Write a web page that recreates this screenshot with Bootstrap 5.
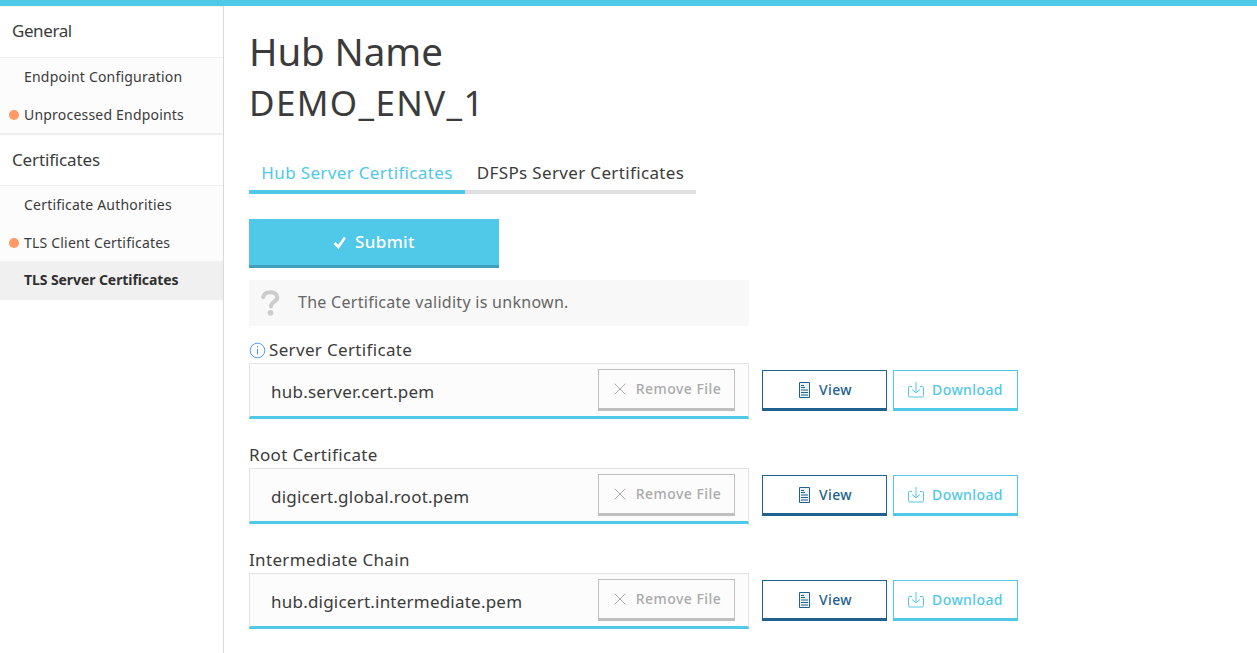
<!DOCTYPE html>
<html lang="en">
<head>
<meta charset="utf-8">
<meta name="viewport" content="width=device-width, initial-scale=1">
<title>TLS Server Certificates</title>
<link href="https://cdn.jsdelivr.net/npm/bootstrap@5.3.0/dist/css/bootstrap.min.css" rel="stylesheet">
<style>
:root{--sky:#50c8e8;--navy:#21618f;--ink:#3b3b3b}
body{font-family:"Noto Sans","Open Sans",sans-serif;color:var(--ink);font-size:17px;height:653px;overflow:hidden;border-top:6px solid var(--sky)}
.side{width:224px;border-right:1px solid #d9d9d9}
.side-title{height:51px;padding:0 0 1px 12px;letter-spacing:-.15px;border-bottom:1px solid #efefef}
.side-title.top{height:52px;padding-bottom:3px;letter-spacing:-.42px;border-top:1px solid #f4f4f4}
.side-group{background:#fcfcfc}
.side-group.first{border-bottom:2px solid #f0f0f0}
.side-link{height:37.5px;padding-left:24px;font-size:14px;letter-spacing:.2px;color:var(--ink);text-decoration:none;position:relative}
.side-link.current{height:39px;padding-bottom:3px;background:#f0f0f0;font-weight:700;letter-spacing:-.08px;color:#303030}
.pending::before{content:"";position:absolute;left:9px;top:14px;width:10px;height:10px;border-radius:50%;background:#ff9966}
.main-col{padding:17px 0 0 25px}
.hub-title{font-size:38.5px;line-height:56px;font-weight:400;letter-spacing:-.1px;margin:0}
.hub-name{font-size:35px;line-height:48px;font-weight:400;letter-spacing:1.35px;margin:0}
.tabs{margin-top:28px}
.tab{height:39px;border-bottom:4px solid #e0e0e0;letter-spacing:.35px;color:var(--ink);text-decoration:none}
.tab.on{color:var(--sky);border-color:var(--sky)}
.submit{width:250px;height:49px;margin-top:25px;border:0;border-bottom:3px solid #3f9fb8;border-radius:0;background:var(--sky);color:#fff;font-size:17px;font-weight:500;letter-spacing:.35px;padding:0}
.notice{width:500px;height:46px;margin-top:12px;background:#f8f8f8;color:#666;font-size:16px;letter-spacing:.28px;padding-left:12px}
.notice span{margin-left:18px;margin-bottom:2px}
.file-label{height:26px;line-height:26px;white-space:nowrap;letter-spacing:.34px;margin-top:23px}
.file-label.lead-in{margin-top:11px}
.file-name{letter-spacing:.22px;padding-top:3px}
.file-box{width:500px;height:56px;background:#fcfcfc;border:1px solid #e3e3e3;border-bottom:3px solid var(--sky);padding:0 13px 0 21px}
.act{border:1px solid;border-bottom-width:3px;border-radius:0;background:#fff;font-size:14px;font-weight:500;padding:0;height:41px;width:125px;letter-spacing:.4px}
.remove{width:137px;height:42px;color:#aaa;border-color:#bfbfbf;margin-bottom:1px;background:transparent;letter-spacing:.45px;padding-left:2px;gap:10px}
.view{color:var(--navy);border-color:var(--navy);margin-left:13px;margin-bottom:1px;padding-left:2px}
.download{color:var(--sky);border-color:var(--sky);margin-left:6px;margin-bottom:1px}
</style>
</head>
<body class="d-flex">
<svg class="d-none">
  <symbol id="i-x" viewBox="0 0 12 12"><path d="M.7.7l10.6 10.6M11.3.7L.7 11.3" fill="none" stroke="currentColor"/></symbol>
  <symbol id="i-doc" viewBox="0 0 12 16"><path d="M.5.5h10v15H.5z" fill="#edf3f7" stroke="currentColor"/><path d="M2 3.5h3M2 5.5h4M2 8h7M2 10.5h7M2 13h7" stroke="currentColor"/></symbol>
  <symbol id="i-down" viewBox="0 0 16 16"><path d="M4 4.5H1.7Q.5 4.500.5 5.700V13.500Q.5 15 2 15H14Q15.500 15 15.500 13.500V5.700Q15.500 4.500 14.300 4.500H12M8 0V10.500M4 7.500L8 10.800L12 7.500" fill="none" stroke="currentColor"/></symbol>
</svg>
<nav class="side flex-shrink-0">
  <div class="side-title top d-flex align-items-center">General</div>
  <div class="side-group first">
    <a class="side-link d-flex align-items-center" href="#">Endpoint Configuration</a>
    <a class="side-link pending d-flex align-items-center" href="#">Unprocessed Endpoints</a>
  </div>
  <div class="side-title d-flex align-items-center">Certificates</div>
  <div class="side-group">
    <a class="side-link d-flex align-items-center" href="#">Certificate Authorities</a>
    <a class="side-link pending d-flex align-items-center" href="#">TLS Client Certificates</a>
    <a class="side-link current d-flex align-items-center" href="#">TLS Server Certificates</a>
  </div>
</nav>
<main class="main-col flex-grow-1">
  <h1 class="hub-title"><span>Hub Name</span></h1>
  <h2 class="hub-name"><span>DEMO_ENV_1</span></h2>
  <div class="tabs d-flex">
    <a class="tab on d-flex align-items-center justify-content-center" style="width:216px" href="#">Hub Server Certificates</a>
    <a class="tab d-flex align-items-center justify-content-center" style="width:231px" href="#">DFSPs Server Certificates</a>
  </div>
  <button class="submit btn d-flex align-items-center justify-content-center"><svg class="me-2" width="14" height="14" viewBox="0 0 14 14"><path d="M1.500 8l3.800 4L12 2.500" fill="none" stroke="#fff" stroke-width="2.600"/></svg><span>Submit</span></button>
  <div class="notice d-flex align-items-center"><svg width="19" height="26" viewBox="0 0 19 26"><path d="M2.200 7C3 3.800 6 2.200 9.500 2.200c4 0 6.800 2 6.800 5.300 0 4-6.300 4.500-6.300 9" fill="none" stroke="#ccc" stroke-width="4" stroke-linecap="round"/><circle cx="9.500" cy="22.800" r="2.900" fill="#ccc"/></svg><span>The Certificate validity is unknown.</span></div>

  <div class="file-label lead-in d-flex align-items-center"><svg width="17" height="17" viewBox="0 0 17 17" style="margin-right:3px"><circle cx="8.500" cy="8.500" r="7.300" fill="none" stroke="#4a9df8"/><path d="M8.500 7v5.500M8.500 4v1.500" stroke="#4a9df8"/></svg><span>Server Certificate</span></div>
  <div class="d-flex align-items-center">
    <div class="file-box d-flex align-items-center justify-content-between"><span class="file-name">hub.server.cert.pem</span><button class="btn act remove d-flex align-items-center justify-content-center"><svg width="12" height="12"><use href="#i-x"/></svg><span>Remove File</span></button></div>
    <button class="btn act view d-flex align-items-center justify-content-center"><svg class="me-2" width="12" height="16"><use href="#i-doc"/></svg><span>View</span></button>
    <button class="btn act download d-flex align-items-center justify-content-center"><svg class="me-2" width="16" height="16"><use href="#i-down"/></svg><span>Download</span></button>
  </div>
  <div class="file-label"><span>Root Certificate</span></div>
  <div class="d-flex align-items-center">
    <div class="file-box d-flex align-items-center justify-content-between"><span class="file-name">digicert.global.root.pem</span><button class="btn act remove d-flex align-items-center justify-content-center"><svg width="12" height="12"><use href="#i-x"/></svg><span>Remove File</span></button></div>
    <button class="btn act view d-flex align-items-center justify-content-center"><svg class="me-2" width="12" height="16"><use href="#i-doc"/></svg><span>View</span></button>
    <button class="btn act download d-flex align-items-center justify-content-center"><svg class="me-2" width="16" height="16"><use href="#i-down"/></svg><span>Download</span></button>
  </div>
  <div class="file-label"><span>Intermediate Chain</span></div>
  <div class="d-flex align-items-center">
    <div class="file-box d-flex align-items-center justify-content-between"><span class="file-name">hub.digicert.intermediate.pem</span><button class="btn act remove d-flex align-items-center justify-content-center"><svg width="12" height="12"><use href="#i-x"/></svg><span>Remove File</span></button></div>
    <button class="btn act view d-flex align-items-center justify-content-center"><svg class="me-2" width="12" height="16"><use href="#i-doc"/></svg><span>View</span></button>
    <button class="btn act download d-flex align-items-center justify-content-center"><svg class="me-2" width="16" height="16"><use href="#i-down"/></svg><span>Download</span></button>
  </div>
</main>
<script src="https://cdn.jsdelivr.net/npm/bootstrap@5.3.0/dist/js/bootstrap.bundle.min.js"></script>
</body>
</html>
